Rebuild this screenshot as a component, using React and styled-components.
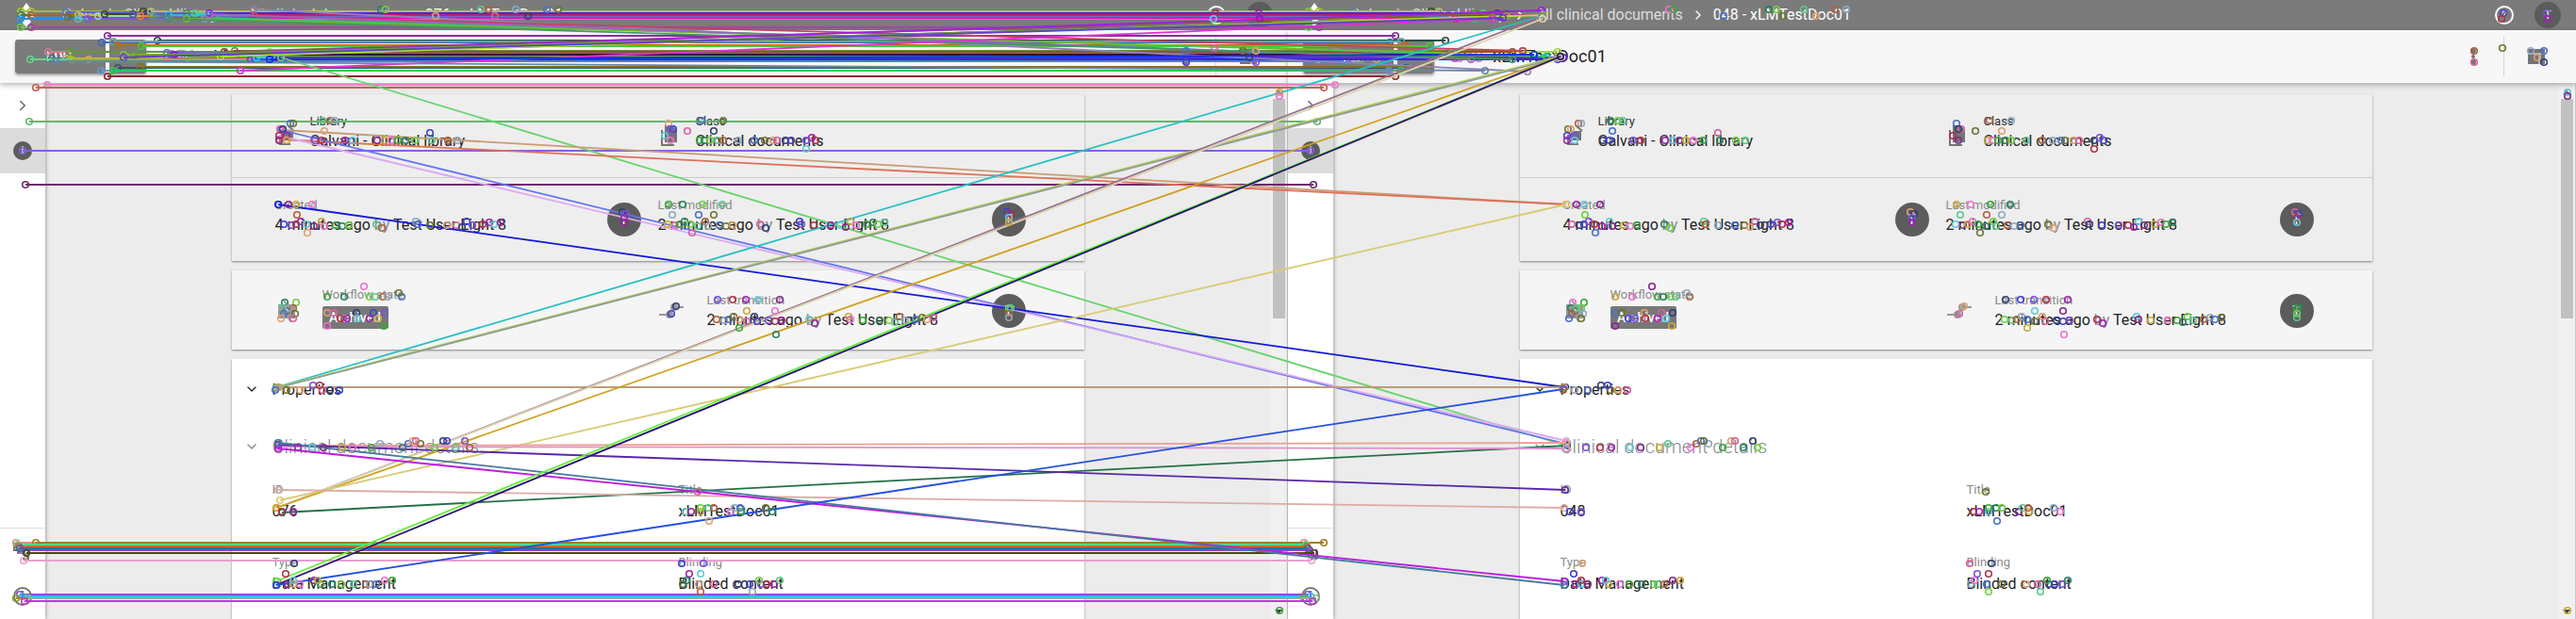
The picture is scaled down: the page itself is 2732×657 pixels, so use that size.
import React from "react";
import styled, { createGlobalStyle } from "styled-components";
import { ChevronRight, ChevronDown } from "lucide-react";

const GlobalStyle = createGlobalStyle`
  * { box-sizing: border-box; }
  body { margin: 0; background: #ececec; font-family: Roboto, "Liberation Sans", sans-serif; }
  button { font: inherit; border: 0; padding: 0; background: none; color: inherit; }
`;

const Page = styled.main`
  position: relative;
  display: flex;
  height: 100vh;
  overflow: hidden;
`;
const Panel = styled.section`
  flex: 1;
  min-width: 0;
  display: flex;
  flex-direction: column;
`;
const Header = styled.header`
  height: 32px;
  flex: none;
  display: flex;
  align-items: center;
  padding: 0 16px;
  background: #7b7b7b;
  color: #fff;
`;
const Crumbs = styled.nav`
  flex: 1;
  display: flex;
  align-items: center;
  gap: 8px;
  padding-left: 26px;
  font-size: 16px;
  line-height: 20px;
  white-space: nowrap;
`;
const Crumb = styled.a`
  color: ${(p) => (p.$current ? "#fff" : "#ddd")};
  text-decoration: none;
`;
const HelpButton = styled.button`
  width: 20px;
  height: 20px;
  margin-right: 22px;
  border: 2px solid #fff;
  border-radius: 50%;
  font-size: 12px;
  line-height: 16px;
`;
const Avatar = styled.button`
  flex: none;
  width: ${(p) => p.$size}px;
  height: ${(p) => p.$size}px;
  border-radius: 50%;
  background: #5c5c5c;
  color: #fff;
  font-size: ${(p) => (p.$size > 30 ? 14 : 12)}px;
`;
const Toolbar = styled.div`
  position: relative;
  z-index: 1;
  height: 56px;
  flex: none;
  display: flex;
  align-items: center;
  padding: 0 30px 0 16px;
  background: #f7f7f7;
  box-shadow: 0 2px 6px rgba(0, 0, 0, 0.3);
`;
const SplitButton = styled.div`
  display: flex;
  gap: 4px;
  border-radius: 3px;
  box-shadow: 0 2px 3px rgba(0, 0, 0, 0.35);
`;
const Action = styled.button`
  width: ${(p) => p.$width}px;
  height: 36px;
  display: grid;
  place-items: center;
  border-radius: 3px;
  background: #7b7b7b;
  color: #fff;
  font-size: 14px;
  font-weight: 500;
`;
const Title = styled.h1`
  flex: 1;
  display: flex;
  gap: 10px;
  margin: 0 0 0 22px;
  font-size: 18px;
  line-height: 24px;
  font-weight: 400;
  color: #222;
`;
const Number = styled.span`
  color: #999;
`;
const IconButton = styled.button`
  display: grid;
  place-items: center;
  width: 24px;
  height: 24px;
`;
const Divider = styled.span`
  width: 1px;
  height: 42px;
  margin: 0 22px 0 20px;
  background: #d4d4d4;
`;
const Body = styled.div`
  flex: 1;
  min-height: 0;
  display: flex;
`;
const Sidebar = styled.nav`
  width: 48px;
  flex: none;
  display: flex;
  flex-direction: column;
  background: #fff;
  box-shadow: 1px 0 4px rgba(0, 0, 0, 0.3);
`;
const SideItem = styled.button`
  height: 48px;
  flex: none;
  display: grid;
  place-items: center;
  color: #666;
  background: ${(p) => (p.$active ? "#dcdcdc" : "transparent")};
`;
const SideDot = styled.span`
  width: 20px;
  height: 20px;
  border-radius: 50%;
  background: #5c5c5c;
  color: #fff;
  font-size: 12px;
  line-height: 20px;
`;
const SideFoot = styled.div`
  display: flex;
  flex-direction: column;
  margin-top: auto;
  border-top: 1px solid #ddd;
`;
const Content = styled.div`
  flex: 1;
  min-width: 0;
  overflow: hidden;
  padding: 12px 0 0;
`;
const Cards = styled.div`
  max-width: 904px;
  margin: 0 auto;
  display: flex;
  flex-direction: column;
  gap: 10px;
`;
const Card = styled.article`
  background: ${(p) => p.$tone};
  box-shadow: 0 1px 2px rgba(0, 0, 0, 0.45);
`;
const Row = styled.div`
  min-height: ${(p) => p.$height}px;
  display: grid;
  grid-template-columns: 406px 1fr;
  align-items: center;
  padding: ${(p) => p.$top || 0}px 62px 0 46px;
  & + & { border-top: 1px solid #ccc; }
`;
const Cell = styled.div`
  display: flex;
  align-items: center;
  gap: ${(p) => p.$gap || 0}px;
  padding-right: ${(p) => p.$end || 0}px;
`;
const Texts = styled.div`
  flex: 1;
  padding-bottom: ${(p) => (p.$raised ? 8 : 0)}px;
  white-space: nowrap;
`;
const Label = styled.div`
  font-size: 13px;
  line-height: 20px;
  color: ${(p) => (p.$strong ? "#333" : "#8a8a8a")};
`;
const Value = styled.div`
  font-size: 16px;
  line-height: ${(p) => (p.$loose ? 26 : 22)}px;
  color: #222;
`;
const By = styled.span`
  color: #888;
`;
const Badge = styled.span`
  display: inline-block;
  margin-top: 2px;
  width: 70px;
  height: 24px;
  border-radius: 2px;
  background: #787878;
  color: #fff;
  font-size: 14px;
  font-weight: 500;
  line-height: 24px;
  text-align: center;
`;
const Section = styled.h2`
  display: flex;
  align-items: center;
  gap: 14px;
  height: ${(p) => (p.$minor ? 58 : 64)}px;
  margin: 0;
  padding-left: 13px;
  color: ${(p) => (p.$minor ? "#888" : "#222")};
  font-size: ${(p) => (p.$minor ? 20 : 16)}px;
  font-weight: ${(p) => (p.$minor ? 300 : 400)};
`;
const Fields = styled.div`
  display: grid;
  grid-template-columns: 431px 1fr;
  grid-auto-rows: 77px;
  padding: 7px 0 140px 43px;
`;
const ScrollTrack = styled.div`
  width: 19px;
  flex: none;
  display: flex;
  flex-direction: column;
  align-items: center;
  padding: 6px 3px 4px;
  background: #f0f0f0;
  border-right: 1px solid #c8c8c8;
`;
const ScrollThumb = styled.div`
  width: 13px;
  height: 233px;
  margin: 3px 0 auto;
  background: #c1c1c1;
`;
const Overlay = styled.svg`
  position: absolute;
  z-index: 2;
  inset: 0;
  width: 100%;
  height: 100%;
  pointer-events: none;
`;

const Svg = ({ w = 24, children }) => (
  <svg width={w} height={w} viewBox="0 0 24 24" fill="none" stroke="#747474" strokeWidth="2">{children}</svg>
);
const Logo = () => (
  <svg width="24" height="28" viewBox="0 0 24 28" fill="#fff"><path d="M12 1l5 7-5 5-5-5zM12 15l5 6-5 6-5-6zM3 9l6 5-6 5zM21 9l-6 5 6 5z" /></svg>
);
const Books = () => <Svg><path fill="#747474" d="M9 8h9v8H9z" /><path d="M5 11v10h11M14 2l6 5" /></Svg>;
const Docs = () => <Svg><path fill="#747474" stroke="none" d="M7 1h8l5 5v13H7z" /><path d="M4 6v16h13" /></Svg>;
const Gear = () => <Svg><path fill="#999" stroke="none" d="M3 5h18v15H3z" /><path stroke="#999" d="M9 1l3 4M14 20l3 4" /><circle cx="12" cy="12" r="3" fill="#fff" /></Svg>;
const Transition = () => (
  <svg width="28" height="20" viewBox="0 0 28 20" stroke="#999" strokeWidth="2" fill="#999"><path d="M1 14h12M16 6h11" /><circle cx="12" cy="14" r="3" /><circle cx="17" cy="6" r="3" /></svg>
);

const Stamp = ({ count }) => (
  <Value>{count} minutes ago <By>by</By> Test User Eight 8</Value>
);
const Field = ({ label, value }) => (
  <div><Label>{label}</Label><Value $loose>{value}</Value></div>
);

const DocumentPanel = ({ id }) => (
  <Panel>
    <Header>
      <Logo />
      <Crumbs aria-label="Breadcrumb">
        <Crumb href="#library">Galvani - Clinical library</Crumb>
        <ChevronRight size={16} />
        <Crumb href="#documents">All clinical documents</Crumb>
        <ChevronRight size={16} />
        <Crumb href="#document" $current>{id} - xLMTestDoc01</Crumb>
      </Crumbs>
      <HelpButton aria-label="Help">?</HelpButton>
      <Avatar $size={28} aria-label="Account">T</Avatar>
    </Header>
    <Toolbar>
      <SplitButton>
        <Action $width={96}>EDIT</Action>
        <Action $width={39} aria-label="More actions"><ChevronDown size={16} /></Action>
      </SplitButton>
      <Title><Number>{id}</Number>xLMTestDoc01</Title>
      <IconButton aria-label="Options">
        <Svg><g fill="#747474" stroke="none"><circle cx="12" cy="6" r="3" /><circle cx="12" cy="12" r="2" /><circle cx="12" cy="18" r="3" /></g></Svg>
      </IconButton>
      <Divider />
      <IconButton aria-label="Panel layout">
        <Svg><path fill="#747474" stroke="none" d="M3 4h18v16H3z" /><path stroke="#f7f7f7" strokeWidth="1" d="M3 9h18M15 9v11" /></Svg>
      </IconButton>
    </Toolbar>
    <Body>
      <Sidebar>
        <SideItem aria-label="Expand"><ChevronRight size={18} /></SideItem>
        <SideItem $active aria-label="Information"><SideDot>i</SideDot></SideItem>
        <SideFoot>
          <SideItem aria-label="Relations"><Svg><path d="M3 4h7v7H3zM7 15v-4M11 11l7 8M18 10v10h-6" /></Svg></SideItem>
          <SideItem aria-label="History"><Svg><circle cx="12" cy="12" r="9" /><path d="M12 6v6l-5 3" /></Svg></SideItem>
        </SideFoot>
      </Sidebar>
      <Content>
        <Cards>
          <Card $tone="#eeeeee">
            <Row $height={88}>
              <Cell $gap={13}><Books /><Texts $raised><Label $strong>Library</Label><Value>Galvani - Clinical library</Value></Texts></Cell>
              <Cell $gap={16}><Docs /><Texts $raised><Label $strong>Class</Label><Value>Clinical documents</Value></Texts></Cell>
            </Row>
            <Row $height={89}>
              <Cell $end={18}><Texts $raised><Label>Created</Label><Stamp count={4} /></Texts><Avatar $size={36} aria-label="Created by">T</Avatar></Cell>
              <Cell><Texts $raised><Label>Last modified</Label><Stamp count={2} /></Texts><Avatar $size={36} aria-label="Modified by">T</Avatar></Cell>
            </Row>
          </Card>
          <Card $tone="#f5f5f5">
            <Row $height={84} $top={2}>
              <Cell $gap={26}><Gear /><Texts $raised><Label>Workflow state</Label><Badge>Archived</Badge></Texts></Cell>
              <Cell $gap={24}><Transition /><Texts><Label>Last transition</Label><Stamp count={2} /></Texts><Avatar $size={36} aria-label="Transition by">T</Avatar></Cell>
            </Row>
          </Card>
          <Card $tone="#ffffff">
            <Section><ChevronDown size={16} />Properties</Section>
            <Section $minor><ChevronDown size={16} />Clinical document details</Section>
            <Fields>
              <Field label="ID" value={id} />
              <Field label="Title" value="xLMTestDoc01" />
              <Field label="Type" value="Data Management" />
              <Field label="Blinding" value="Blinded content" />
            </Fields>
          </Card>
        </Cards>
      </Content>
      <ScrollTrack>
        <svg width="8" height="8" viewBox="0 0 8 8"><path d="M0 6l4-5 4 5z" fill="#888" /></svg>
        <ScrollThumb />
        <svg width="8" height="8" viewBox="0 0 8 8"><path d="M0 2l4 5 4-5z" fill="#444" /></svg>
      </ScrollTrack>
    </Body>
  </Panel>
);

/* Colours cycled through by the keypoint markers. */
const PALETTE = [
  "#5cc88c", "#a020b0", "#4a70c8", "#c8a83c", "#d860a0", "#28805c", "#7850e0", "#b0603c",
  "#60c8d8", "#6c7430", "#f070d0", "#304078", "#70d040", "#b03048", "#90a8c0", "#882890",
  "#e0a070", "#38a838", "#4040d0",
];

/* Keypoints within one panel, as rows of [y, x, x, ...]. */
const POINTS = [
  [128, 342, 350, 355, 744, 767], [139, 344, 729, 757], [141, 456],
  [149, 334, 341, 366, 374, 400, 408, 415, 422, 430, 440, 458, 475, 485],
  [131, 308, 311, 709], [137, 297, 300, 714, 711], [144, 296, 304, 705], [149, 296, 304, 711],
  [149, 742, 747, 753, 761, 767, 783, 800, 811, 820, 824, 833, 839, 855, 865], [146, 861], [158, 855],
  [217, 306, 314, 331, 709, 724, 745, 766], [228, 315, 713, 741, 757], [247, 326, 734],
  [225, 660, 1068], [227, 664, 1072], [231, 662, 1070], [236, 662, 1070],
  [304, 386], [315, 347, 365, 392, 398, 406, 411, 426], [311, 423],
  [332, 347, 354, 378, 396, 408], [338, 361, 368, 379, 392, 401], [346, 347, 407],
  [321, 302, 314], [327, 300, 311, 306], [333, 301, 313], [338, 298, 311],
  [325, 717], [333, 712], [318, 761, 777, 791, 804, 827], [330, 792, 822], [348, 784], [355, 823],
  [327, 1070, 1072], [333, 1070], [337, 1070],
  [414, 292, 304, 318, 342, 350, 360], [409, 332, 339],
  [475, 316, 331, 343, 363, 374, 394, 427, 461, 483, 498], [471, 403, 433, 446], [468, 438, 441, 470, 474, 493],
  [543, 299, 311, 727, 733, 743, 775, 786, 819], [539, 743, 751, 757, 779, 785, 812], [553, 752], [522, 740],
  [598, 312, 723, 746], [609, 303, 731, 743],
  [620, 305, 311, 318, 340, 352, 362, 375, 388, 392, 399, 724, 741, 757, 783, 795, 807, 813, 821],
  [616, 311, 333, 337, 408, 416, 728, 805, 827], [628, 743, 798],
  [54, 1258, 1318, 1332], [51, 1288], [61, 1325], [66, 1258, 1332], [14, 1289, 1335], [20, 1287, 1336],
  [98, 1357], [102, 1357], [648, 1357], [10, 404, 409, 510, 518, 547, 580, 592], [17, 462, 525, 560],
];
const STAMPS = [[0, 0], [407, 0], [459, 101]];
const STAMP_POINTS = [
  [301, 238], [309, 239], [314, 238], [319, 235], [325, 238], [333, 240], [341, 235], [344, 240],
  [356, 239], [363, 240], [370, 239], [399, 238], [405, 242], [441, 235], [443, 238], [456, 239],
  [474, 239], [484, 239], [490, 241], [495, 235], [501, 239], [512, 238], [519, 236], [524, 238], [531, 236],
];
const panelPoints = [
  ...POINTS.flatMap(([y, ...xs]) => xs.map((x) => [x, y])),
  ...STAMPS.flatMap(([dx, dy]) => STAMP_POINTS.map(([x, y]) => [x + dx, y + dy])),
];

/* Matches that keep their place from the left panel to the right: [x, y, colour]. */
const LEVEL = [
  [22, 12, "#8cc83c"], [33, 12, "#a0b848"], [22, 16, "#58704c"], [22, 20, "#2090f0"], [33, 16, "#b06030"],
  [70, 13, "#6068c8"], [72, 18, "#806828"], [83, 16, "#c8b848"], [83, 20, "#60b8d0"], [93, 20, "#7858e0"],
  [104, 17, "#90d8d0"], [111, 15, "#404818"], [141, 15, "#505890"], [152, 12, "#404830"], [149, 17, "#f08020"],
  [160, 12, "#b8b868"], [162, 17, "#48a868"], [170, 17, "#6870c0"], [179, 16, "#28b8f0"], [178, 20, "#e810b0"],
  [198, 14, "#409048"], [198, 20, "#38c060"], [207, 14, "#50c8a0"], [217, 20, "#a080d0"], [222, 14, "#5020e0"],
  [228, 19, "#e810b8"], [269, 16, "#c81880"], [22, 29, "#70c850"], [33, 29, "#a048a0"],
  [114, 38, "#8c2c9c"], [114, 81, "#902830"], [167, 43, "#2c4c48"], [108, 45, "#3c68b8"], [120, 44, "#60a8a0"],
  [125, 48, "#c06810"], [150, 49, "#48c838"], [125, 72, "#305868"], [149, 71, "#807020"], [107, 75, "#6898c8"],
  [120, 75, "#20d050"], [51, 55, "#d87888"], [74, 55, "#609838"], [131, 58, "#90b060"], [142, 59, "#a050c0"],
  [55, 62, "#287880"], [70, 62, "#d0a898"], [32, 63, "#60d888"], [94, 63, "#d8a060"], [59, 65, "#4888b8"],
  [177, 56, "#6868c0"], [185, 58, "#28103c"], [199, 61, "#70a8d8"], [177, 62, "#e030c0"], [76, 63, "#98b818"],
  [234, 60, "#48b830"], [266, 63, "#5048d8"], [272, 61, "#20d8e0"], [286, 55, "#98d858"], [286, 63, "#2030e8"],
  [292, 61, "#8020c0"], [249, 54, "#708838"], [238, 55, "#985020"],
  [50, 90, "#f080c8"], [38, 93, "#cc6050"], [31, 129, "#60b870"], [24, 160, "#8560e0"], [27, 196, "#6e2a6e"],
  [17, 576, "#e09080"], [38, 576, "#a08020"], [19, 578, "#50d890"], [20, 580, "#d06830"], [21, 582, "#287090"],
  [23, 584, "#8848c0"], [28, 587, "#4c4414"], [25, 595, "#e8a0d0"],
  [21, 631, "#8050e0"], [24, 633, "#28c0f0"], [17, 635, "#909828"], [30, 635, "#88b890"], [26, 638, "#c038d0"],
];

/* Matches that move: [x1, y1, x2, y2, colour]. */
const CROSSING = [
  [269, 10, 1620, 76, "#9080b8"], [270, 17, 1615, 54, "#c84060"], [228, 19, 1640, 60, "#30c868"],
  [198, 20, 1540, 56, "#70b830"], [222, 15, 1560, 63, "#a060c0"], [178, 20, 1604, 63, "#409868"],
  [238, 55, 1597, 14, "#806830"], [252, 57, 1591, 18, "#8828c8"], [199, 61, 1598, 17, "#78b030"],
  [185, 58, 1635, 11, "#a020e0"], [234, 60, 1636, 16, "#b0e030"], [142, 59, 1583, 19, "#68a038"],
  [255, 75, 1583, 20, "#e030d0"], [131, 61, 1594, 19, "#6040c8"], [59, 65, 1575, 75, "#6888a0"],
  [286, 63, 1627, 58, "#1030e8"],
  [298, 61, 1661, 473, "#68d46c"], [299, 138, 1661, 217, "#c89c74"], [296, 148, 1661, 217, "#e07058"],
  [298, 138, 1661, 471, "#6474ee"], [296, 144, 1661, 468, "#dca8f4"], [295, 217, 1659, 411, "#1418d8"],
  [293, 411, 1635, 17, "#28c0c4"], [294, 411, 1653, 60, "#b8cc58"], [293, 412, 1651, 62, "#8c9c98"],
  [296, 411, 1659, 411, "#bc9c78"], [294, 539, 1636, 17, "#947090"], [294, 539, 1636, 20, "#dcd4b0"],
  [293, 539, 1655, 60, "#d0a020"], [297, 531, 1661, 217, "#d8cc74"], [299, 544, 1662, 473, "#247048"],
  [295, 520, 1659, 539, "#dcaca4"], [295, 473, 1661, 470, "#eca090"], [295, 474, 1661, 476, "#e090cc"],
  [295, 472, 1660, 520, "#5828a8"], [295, 476, 1659, 617, "#bc1ce0"], [295, 470, 1659, 621, "#447c9c"],
  [293, 617, 1655, 60, "#60f038"], [294, 620, 1655, 61, "#f0c8a0"], [293, 621, 1655, 60, "#201478"],
  [293, 621, 1658, 413, "#2450e0"],
];
const PANEL_WIDTH = 1366;
const MATCHES = [
  ...LEVEL.map(([x, y, color]) => [x, y, x + PANEL_WIDTH, y, color]),
  ...CROSSING,
];

const Keypoint = ({ x, y, color }) => (
  <circle cx={x} cy={y} r="3.3" stroke={color} strokeWidth="1.6" />
);

const MatchOverlay = () => (
  <Overlay viewBox="0 0 2732 657" preserveAspectRatio="xMinYMin" fill="none" aria-hidden="true">
    {MATCHES.map(([x1, y1, x2, y2, color], i) => (
      <g key={i}>
        <line x1={x1} y1={y1} x2={x2} y2={y2} stroke={color} strokeWidth="1.8" />
        <Keypoint x={x1} y={y1} color={color} />
        <Keypoint x={x2} y={y2} color={color} />
      </g>
    ))}
    {[0, 1].map((side) => panelPoints.map(([x, y], i) => (
      <Keypoint key={`${side}-${i}`} x={x + side * PANEL_WIDTH} y={y} color={PALETTE[(i * 7 + side * 5) % PALETTE.length]} />
    )))}
  </Overlay>
);

export default function App() {
  return (
    <>
      <GlobalStyle />
      <Page>
        <DocumentPanel id="076" />
        <DocumentPanel id="048" />
        <MatchOverlay />
      </Page>
    </>
  );
}
